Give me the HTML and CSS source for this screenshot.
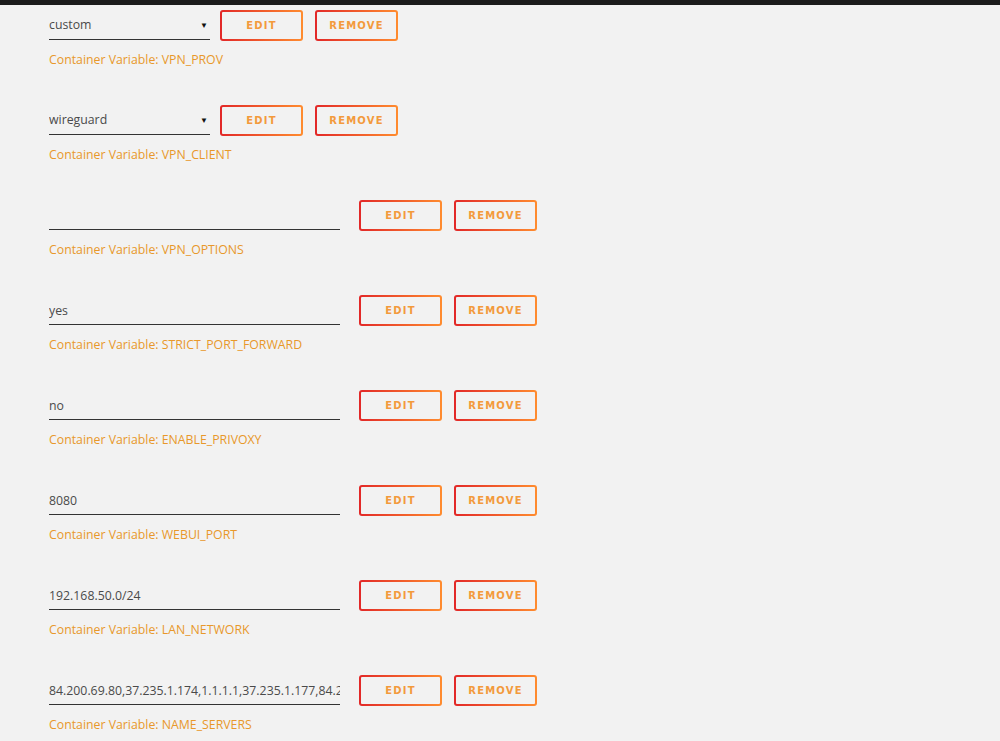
FILE: index.html
```html
<!DOCTYPE html>
<html lang="en">
<head>
  <meta charset="UTF-8" />
  <meta name="viewport" content="width=device-width, initial-scale=1.0"/>
  <title>Container Variables</title>
  <link rel="stylesheet" href="styles.css">
</head>
<body>
  <div class="topbar"></div>

  <section class="vars">
    <div class="var-row">
      <div class="var-line">
        <div class="select">custom<span class="caret">&#9660;</span></div>
        <button class="btn btn-near">Edit</button>
        <button class="btn">Remove</button>
      </div>
      <div class="var-label">Container Variable: VPN_PROV</div>
    </div>

    <div class="var-row">
      <div class="var-line">
        <div class="select">wireguard<span class="caret">&#9660;</span></div>
        <button class="btn btn-near">Edit</button>
        <button class="btn">Remove</button>
      </div>
      <div class="var-label">Container Variable: VPN_CLIENT</div>
    </div>

    <div class="var-row">
      <div class="var-line">
        <input class="text-field" type="text" value="" readonly />
        <button class="btn">Edit</button>
        <button class="btn">Remove</button>
      </div>
      <div class="var-label">Container Variable: VPN_OPTIONS</div>
    </div>

    <div class="var-row">
      <div class="var-line">
        <input class="text-field" type="text" value="yes" readonly />
        <button class="btn">Edit</button>
        <button class="btn">Remove</button>
      </div>
      <div class="var-label">Container Variable: STRICT_PORT_FORWARD</div>
    </div>

    <div class="var-row">
      <div class="var-line">
        <input class="text-field" type="text" value="no" readonly />
        <button class="btn">Edit</button>
        <button class="btn">Remove</button>
      </div>
      <div class="var-label">Container Variable: ENABLE_PRIVOXY</div>
    </div>

    <div class="var-row">
      <div class="var-line">
        <input class="text-field" type="text" value="8080" readonly />
        <button class="btn">Edit</button>
        <button class="btn">Remove</button>
      </div>
      <div class="var-label">Container Variable: WEBUI_PORT</div>
    </div>

    <div class="var-row">
      <div class="var-line">
        <input class="text-field" type="text" value="192.168.50.0/24" readonly />
        <button class="btn">Edit</button>
        <button class="btn">Remove</button>
      </div>
      <div class="var-label">Container Variable: LAN_NETWORK</div>
    </div>

    <div class="var-row">
      <div class="var-line">
        <input class="text-field" type="text" value="84.200.69.80,37.235.1.174,1.1.1.1,37.235.1.177,84.200.70.40,1.0.0.1" readonly />
        <button class="btn">Edit</button>
        <button class="btn">Remove</button>
      </div>
      <div class="var-label">Container Variable: NAME_SERVERS</div>
    </div>
  </section>
</body>
</html>
```

FILE: styles.css
```css
body {
  font-family: "Open Sans", Roboto, sans-serif;
  margin: 0;
  padding: 0;
  background: #f2f2f2;
  overflow: hidden;
}

.topbar {
  height: 5px;
  background: #1c1c1c;
}

.vars {
  padding: 5px 0 0 49px;
}

.var-row {
  padding-bottom: 38px;
}

.var-line {
  display: flex;
  align-items: center;
  height: 31px;
}

.select,
.text-field {
  box-sizing: border-box;
  height: 28px;
  margin: 1px 0 0 0;
  padding: 0;
  line-height: 26px;
  font-family: "Open Sans", Roboto, sans-serif;
  font-size: 12.3px;
  color: #4a4a4a;
  background: transparent;
  border: none;
  border-bottom: 1px solid #333;
  border-radius: 0;
  outline: none;
  white-space: nowrap;
  overflow: hidden;
}

.select {
  position: relative;
  width: 161px;
}

.caret {
  position: absolute;
  right: 2px;
  top: 0;
  font-size: 8px;
  color: #111;
}

.text-field {
  width: 291px;
  margin-right: 19px;
}

.btn {
  box-sizing: border-box;
  width: 83px;
  height: 31px;
  margin-right: 12px;
  padding: 0;
  border: 2px solid transparent;
  border-radius: 3px;
  background: linear-gradient(#f2f2f2, #f2f2f2) padding-box,
              linear-gradient(90deg, #e22828, #ff8c2f) border-box;
  color: #f39a3c;
  font-family: "DejaVu Sans", sans-serif;
  font-size: 10px;
  font-weight: bold;
  letter-spacing: 1.2px;
  text-transform: uppercase;
  cursor: pointer;
}

.btn-near {
  margin-left: 10px;
}

.var-label {
  margin-top: 12px;
  font-size: 12.3px;
  line-height: 14px;
  color: #e8982a;
}
```
